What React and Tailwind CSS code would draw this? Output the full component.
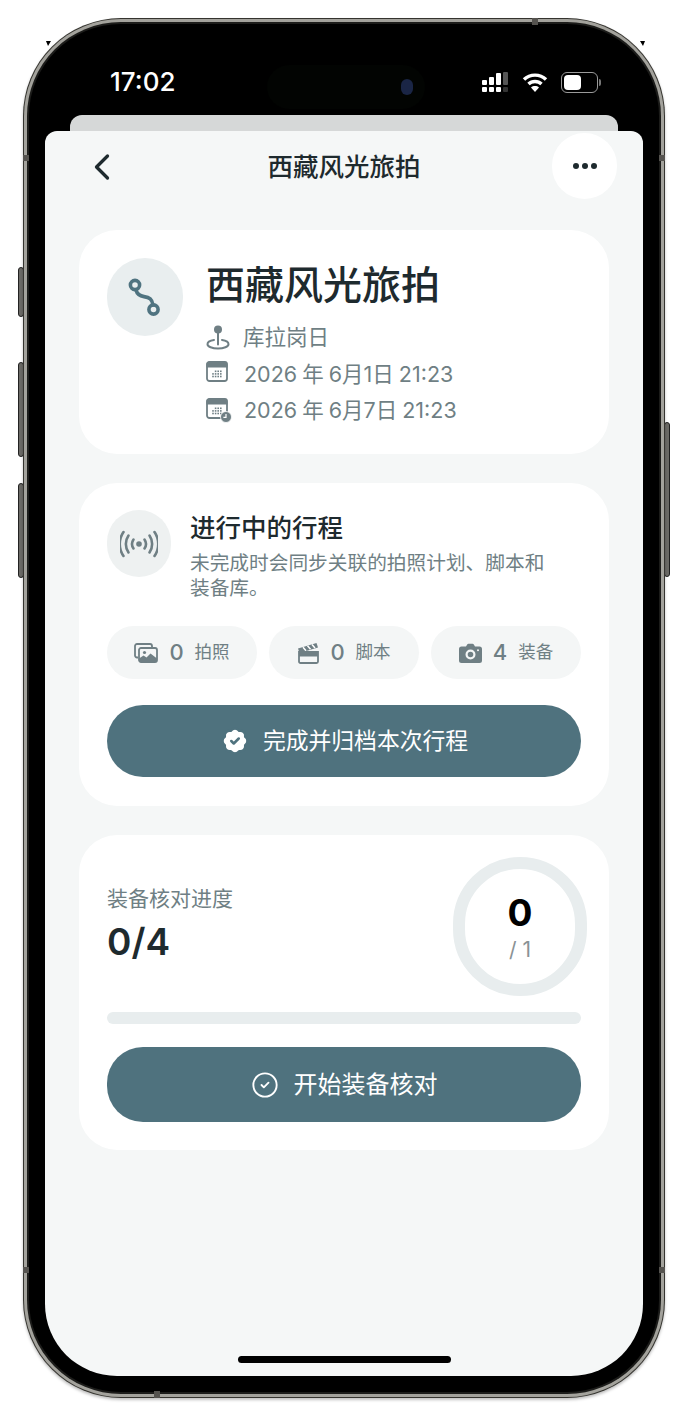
import { BadgeCheck, ChevronLeft, CircleCheck } from 'lucide-react';

const font = 'font-["Inter","Noto_Sans_CJK_SC",sans-serif]';

function SignalIcon() {
  return (
    <svg width="27" height="21" viewBox="0 0 27 21">
      <g fill="#fff">
        <rect x="0" y="8" width="5" height="5" rx="1" />
        <rect x="0" y="15" width="5" height="5" rx="1" />
        <rect x="7" y="5" width="5" height="8" rx="1" />
        <rect x="7" y="15" width="5" height="5" rx="1" />
        <rect x="14" y="1" width="5" height="12" rx="1" />
        <rect x="14" y="15" width="5" height="5" rx="1" />
      </g>
      <rect x="21" y="0" width="5" height="13" rx="1" fill="#555" />
      <rect x="21" y="15" width="5" height="5" rx="1" fill="#333" />
    </svg>
  );
}

function WifiIcon() {
  return (
    <svg width="26" height="22" viewBox="0 0 26 22" fill="none" stroke="#fff" strokeWidth="3.4">
      <path d="M2 8.5C8 2.6 18 2.6 24 8.5" />
      <path d="M6.5 13C10 9.6 16 9.6 19.5 13" />
      <path d="M13 21l-4-4.600c2.200-1.800 5.800-1.800 8 0z" fill="#fff" stroke="none" />
    </svg>
  );
}

function BatteryIcon() {
  return (
    <div className="flex items-center gap-[1px]">
      <div className="w-[37px] h-[21px] rounded-[6px] border border-[#9a9a9a] p-[2px]">
        <div className="w-[17px] h-full rounded-[4px] bg-white" />
      </div>
      <div className="w-[2px] h-[7px] rounded-r-full bg-[#777]" />
    </div>
  );
}

function RouteIcon() {
  return (
    <svg width="34" height="42" viewBox="0 0 34 42" fill="none" stroke="#4f7380" strokeWidth="3.600" strokeLinecap="round">
      <circle cx="7" cy="9" r="4.600" />
      <circle cx="25.500" cy="33.500" r="4.600" />
      <path d="M8 14c1 4 4 6 8 6.600 5.500 .8 8.200 2.400 9 8.400" />
    </svg>
  );
}

function PulseIcon() {
  return (
    <svg width="38" height="28" viewBox="0 0 38 28" fill="none" stroke="#6f7f84" strokeWidth="2.600" strokeLinecap="round">
      <circle cx="19" cy="14" r="2.800" fill="#6f7f84" stroke="none" />
      <path d="M13.500 9.500a8 8 0 0 0 0 9" />
      <path d="M8.500 5.500a15 15 0 0 0 0 17" />
      <path d="M3.500 2a21 21 0 0 0 0 24" />
      <path d="M24.500 9.500a8 8 0 0 1 0 9" />
      <path d="M29.500 5.500a15 15 0 0 1 0 17" />
      <path d="M34.500 2a21 21 0 0 1 0 24" />
    </svg>
  );
}

function PinIcon() {
  return (
    <svg width="24" height="25" viewBox="0 0 24 25" fill="none">
      <circle cx="12" cy="4.500" r="4" fill="#6f7f84" />
      <path d="M12 8v11.500" stroke="#6f7f84" strokeWidth="2" strokeLinecap="round" />
      <path d="M8 15C4 15.600 1.500 17.200 1.500 19.200c0 2.400 4.700 4.300 10.500 4.300s10.500-1.900 10.500-4.300c0-2-2.500-3.600-6.500-4.200" stroke="#6f7f84" strokeWidth="2" strokeLinecap="round" />
    </svg>
  );
}

function CalendarIcon({ clock }) {
  const dots = [];
  for (let row = 0; row < 3; row++) {
    for (let col = 0; col < 4; col++) {
      if (row === 0 && col === 0) continue;
      dots.push(<rect key={row + '-' + col} x={6.200 + col * 2.600} y={9.500 + row * 2.600} width="1.600" height="1.600" fill="#6f7f84" />);
    }
  }
  return (
    <svg width="26" height="25" viewBox="0 0 26 25" fill="none">
      <rect x="1" y="1" width="20" height="19" rx="2.500" stroke="#6f7f84" strokeWidth="1.800" />
      <path d="M3 .5h16a2.500 2.500 0 0 1 2.500 2.500v3.500H.5V3A2.500 2.500 0 0 1 3 .5z" fill="#6f7f84" />
      {dots}
      {clock && (
        <>
          <circle cx="20" cy="19" r="5.500" fill="#6f7f84" stroke="#fff" strokeWidth="0.800" />
          <path d="M20 16v3.300h-2.600" stroke="#fff" strokeWidth="1.200" />
        </>
      )}
    </svg>
  );
}

function ImagesIcon() {
  return (
    <svg width="24" height="20" viewBox="0 0 24 20" fill="none">
      <path d="M4 14.500H3A2 2 0 0 1 1 12.500V3a2 2 0 0 1 2-2h13a2 2 0 0 1 2 2v1" stroke="#6f7f84" strokeWidth="1.800" />
      <rect x="5" y="5" width="18" height="14" rx="2" stroke="#6f7f84" strokeWidth="1.800" />
      <circle cx="10.500" cy="9.500" r="1.600" fill="#6f7f84" />
      <path d="M5 19v-3.500l4.500-3 3 2 4-4 6.500 5V19z" fill="#6f7f84" />
    </svg>
  );
}

function ClapperIcon() {
  return (
    <svg width="22" height="22" viewBox="0 0 22 22" fill="none">
      <path d="M1 6.500 19.500 1l1.500 4.500L2.500 11z" fill="#6f7f84" />
      <path d="M6 5.200l3 3.500M10.500 3.800l3 3.500M15 2.500l3 3.500" stroke="#fff" strokeWidth="1.500" />
      <path d="M2 10h19v9.500a1.500 1.500 0 0 1-1.500 1.500h-16A1.500 1.500 0 0 1 2 19.500z" stroke="#6f7f84" strokeWidth="1.800" />
      <path d="M2 10h19v4.500H2z" fill="#6f7f84" />
    </svg>
  );
}

function CameraIcon() {
  return (
    <svg width="23" height="20" viewBox="0 0 23 20">
      <path fillRule="evenodd" fill="#6f7f84" d="M2.500 3.500H7L8.200 1.500a1.500 1.500 0 0 1 1.300-.7h4a1.500 1.500 0 0 1 1.300.7L16 3.500h4.500A2.500 2.500 0 0 1 23 6v11.500a2.500 2.500 0 0 1-2.500 2.500h-18A2.500 2.500 0 0 1 0 17.500V6a2.500 2.500 0 0 1 2.500-2.500zM11.500 6.500a5 5 0 1 0 0 10 5 5 0 0 0 0-10zm0 2.200a2.800 2.800 0 1 1 0 5.600 2.800 2.800 0 0 1 0-5.600zM19 6.300a1 1 0 1 0 0 2 1 1 0 0 0 0-2z" />
    </svg>
  );
}

function Stat({ icon, count, label }) {
  return (
    <div className="w-[150px] h-[53px] rounded-full bg-[#f4f6f6] flex items-center justify-center">
      {icon}
      <span className="ml-[11px] text-[22px] font-medium text-[#6f7f84]">{count}</span>
      <span className="ml-[11px] text-[17.500px] text-[#6f7f84]">{label}</span>
    </div>
  );
}

function InfoRow({ icon, text, gap }) {
  return (
    <div className="h-[36.500px] flex items-center text-[21.500px] text-[#6f7f84] [word-spacing:-1px]">
      <span className="w-[26px] flex justify-start">{icon}</span>
      <span className={gap}>{text}</span>
    </div>
  );
}

function SideButton({ className }) {
  return (
    <div className={`absolute w-[6px] rounded-[3px] bg-[#6b6a66] border border-[#222] ${className}`} />
  );
}

export default function App() {
  return (
    <div className={`relative w-[687px] h-[1418px] bg-white overflow-hidden pt-[18px] pl-[23px] ${font}`}>
      {/* side buttons */}
      <SideButton className="left-[18px] top-[267px] h-[50px]" />
      <SideButton className="left-[18px] top-[362px] h-[95px]" />
      <SideButton className="left-[18px] top-[483px] h-[95px]" />
      <SideButton className="left-[664px] top-[422px] h-[155px]" />

      {/* leftover corners of the screen mask */}
      <div className="absolute left-[46px] top-[41px] w-[5px] h-[5px] bg-black [clip-path:polygon(0_0,100%_0,40%_100%)]" />
      <div className="absolute left-[640px] top-[41px] w-[5px] h-[5px] bg-black [clip-path:polygon(0_0,100%_0,60%_100%)]" />

      {/* phone frame */}
      <div className="relative w-[642px] h-[1380px] rounded-[98px] bg-[#35342f] p-[1px] shadow-[0_2px_3px_rgba(0,0,0,0.25)]">
        {/* antenna bands */}
        <div className="absolute left-[509px] top-0 w-[6px] h-[7px] bg-[#55534f]" />
        <div className="absolute left-[131px] bottom-0 w-[6px] h-[7px] bg-[#55534f]" />
        <div className="absolute left-0 top-[137px] w-[6px] h-[6px] bg-[#55534f]" />
        <div className="absolute right-0 top-[137px] w-[6px] h-[6px] bg-[#55534f]" />
        <div className="absolute left-0 bottom-[125px] w-[6px] h-[6px] bg-[#55534f]" />
        <div className="absolute right-0 bottom-[125px] w-[6px] h-[6px] bg-[#55534f]" />

        <div className="h-full rounded-[97px] bg-[#a3a29c] p-[3px]">
          <div className="h-full rounded-[94px] bg-[#1c1c1a] p-[2px]">
            <div className="h-full rounded-[92px] bg-black px-[16px] pb-[16px] flex flex-col">
              {/* status bar */}
              <div className="relative h-[91px] shrink-0 flex items-start pt-[35px] pl-[65px] pr-[42px] justify-between text-white">
                <span className="text-[26px] font-medium leading-[46px]">17:02</span>
                <div className="absolute left-[222px] top-[41px] w-[158px] h-[44px] rounded-full bg-[#020402] flex items-center justify-end pr-[12px]">
                  <div className="w-[12px] h-[16px] rounded-full bg-[#1a2545]" />
                </div>
                <div className="flex items-center gap-[13px] h-[46px]">
                  <SignalIcon />
                  <WifiIcon />
                  <BatteryIcon />
                </div>
              </div>

              {/* sheet peeking from behind */}
              <div className="mx-[25px] h-[16px] shrink-0 rounded-t-[12px] bg-[#d6d8d8]" />

              {/* screen */}
              <div className="flex-1 rounded-t-[12px] rounded-b-[72px] bg-[#f5f7f7] flex flex-col relative overflow-hidden">
                <div className="relative h-[72px] shrink-0 flex items-center justify-center">
                  <ChevronLeft className="absolute left-[35px] top-[14px] text-[#1e2a2e]" size={44} strokeWidth={1.800} />
                  <span className="text-[25.500px] font-medium text-[#1e2a2e]">西藏风光旅拍</span>
                  <div className="absolute right-[26px] top-[2px] w-[65px] h-[66px] rounded-full bg-white flex items-center justify-center gap-[3px]">
                    <span className="w-[6px] h-[6px] rounded-full bg-[#1e2a2e]" />
                    <span className="w-[6px] h-[6px] rounded-full bg-[#1e2a2e]" />
                    <span className="w-[6px] h-[6px] rounded-full bg-[#1e2a2e]" />
                  </div>
                </div>

                <div className="px-[34px] pt-[27px] flex flex-col gap-[29px]">
                  {/* trip card */}
                  <div className="h-[224px] rounded-[38px] bg-white pl-[28px] pt-[28px] flex gap-[23px]">
                    <div className="w-[76px] h-[78px] shrink-0 rounded-full bg-[#e9eeef] flex items-center justify-center">
                      <RouteIcon />
                    </div>
                    <div>
                      <div className="text-[39px] leading-[53px] font-medium text-[#1e2a2e]">西藏风光旅拍</div>
                      <div className="mt-[8px]">
                        <InfoRow icon={<PinIcon />} text="库拉岗日" gap="ml-[11px]" />
                        <InfoRow icon={<CalendarIcon />} text="2026 年 6月1日 21:23" gap="ml-[12px]" />
                        <InfoRow icon={<CalendarIcon clock />} text="2026 年 6月7日 21:23" gap="ml-[12px]" />
                      </div>
                    </div>
                  </div>

                  {/* active trip card */}
                  <div className="h-[323px] rounded-[38px] bg-white px-[28px] pt-[27px]">
                    <div className="flex gap-[19px]">
                      <div className="w-[64px] h-[67px] shrink-0 rounded-full bg-[#eef1f1] flex items-center justify-center">
                        <PulseIcon />
                      </div>
                      <div>
                        <div className="pt-[1px] text-[25.500px] leading-[34px] font-medium text-[#1e2a2e]">进行中的行程</div>
                        <div className="mt-[6px] w-[360px] text-[19.700px] leading-[25px] text-[#6f7f84]">未完成时会同步关联的拍照计划、脚本和装备库。</div>
                      </div>
                    </div>
                    <div className="mt-[25px] flex justify-between">
                      <Stat icon={<ImagesIcon />} count="0" label="拍照" />
                      <Stat icon={<ClapperIcon />} count="0" label="脚本" />
                      <Stat icon={<CameraIcon />} count="4" label="装备" />
                    </div>
                    <div className="mt-[26px] h-[72px] rounded-[36px] bg-[#4f727e] flex items-center justify-center gap-[13px] text-white text-[22.800px]">
                      <BadgeCheck className="text-[#4f727e] fill-white" size={30} strokeWidth={2} />
                      完成并归档本次行程
                    </div>
                  </div>

                  {/* gear check card */}
                  <div className="h-[315px] rounded-[38px] bg-white pl-[28px] pr-[28px] pt-[22px]">
                    <div className="flex justify-between items-center">
                      <div>
                        <div className="-mt-[2px] text-[21px] leading-[30px] text-[#6f7f84]">装备核对进度</div>
                        <div className="mt-[3px] text-[37px] leading-[50px] font-semibold text-[#1e2a2e]">0/4</div>
                      </div>
                      <div className="w-[134px] h-[139px] -mr-[6px] rounded-full border-[12px] border-[#e8edee] flex flex-col items-center justify-center pt-[4px]">
                        <span className="text-[37px] leading-[42px] font-bold text-black">0</span>
                        <span className="pt-[1px] text-[21px] leading-[30px] text-[#8a9295]">/ 1</span>
                      </div>
                    </div>
                    <div className="mt-[16px] h-[12px] rounded-full bg-[#e8edee]" />
                    <div className="mt-[23px] h-[75px] rounded-[36px] bg-[#4f727e] flex items-center justify-center gap-[15px] text-white text-[24px]">
                      <CircleCheck size={28} strokeWidth={1.600} />
                      开始装备核对
                    </div>
                  </div>
                </div>

                {/* home indicator */}
                <div className="absolute left-[193px] bottom-[13px] w-[213px] h-[7px] rounded-full bg-black" />
              </div>
            </div>
          </div>
        </div>
      </div>
    </div>
  );
}
